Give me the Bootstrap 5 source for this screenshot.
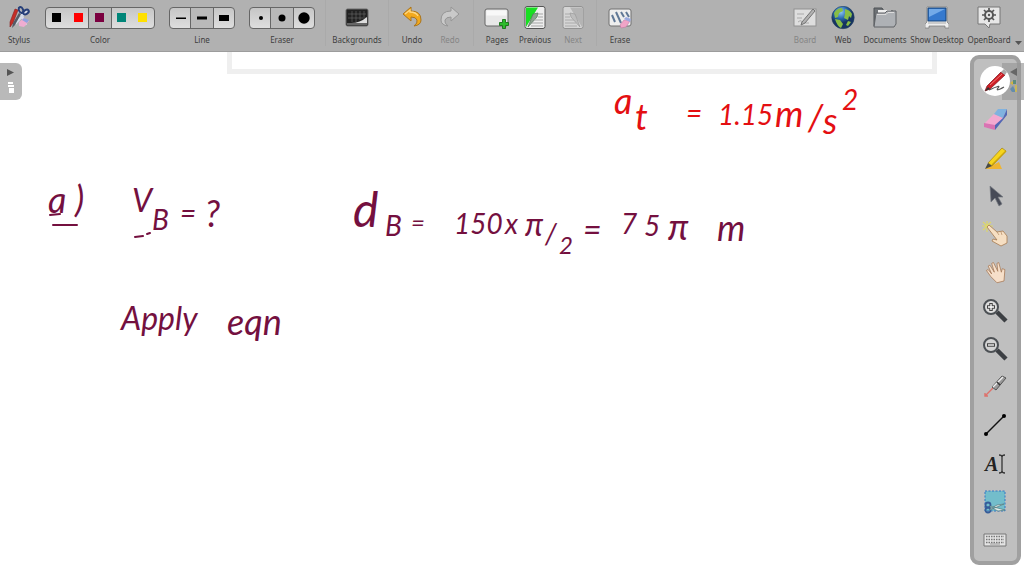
<!DOCTYPE html>
<html lang="en">
<head>
<meta charset="utf-8">
<meta name="viewport" content="width=device-width, initial-scale=1">
<title>OpenBoard</title>
<link href="https://cdn.jsdelivr.net/npm/bootstrap@5.3.0/dist/css/bootstrap.min.css" rel="stylesheet">
<style>
  body { font-family: "Noto Sans", "Open Sans", sans-serif; background: #fff; overflow: hidden; }
  .toolbar { background: #b1b1b1; height: 52px; padding-top: 6px; border-bottom: 1px solid #9c9c9c; font-size: 8px; line-height: 12px; color: #3e3e3e; }
  .tool { width: 38px; padding: 0; border: 0; background: none; color: inherit; white-space: nowrap; }
  .tool svg { width: 24px; height: 24px; margin-bottom: 4px; }
  .tool:disabled { color: #858585; }
  .tool-wide { width: 62px; }
  .tool-docs { width: 46px; }
  .tool-desk { width: 58px; }
  .pick-group { width: 66px; margin-left: 14px; }
  .pick-colors { width: 110px; margin-left: 7px; }
  .picker { margin: 1px 0 5px; border: 1px solid #666; border-radius: 4px; background: linear-gradient(#c6c6c6, #dedede); overflow: hidden; }
  .picker label { flex: 1 1 0; min-width: 0; height: 20px; cursor: pointer; }
  .picker .btn-check:checked + label { background: #b9b9b9; box-shadow: -1px 0 #666, 1px 0 #666; }
  .sep { width: 1px; height: 46px; margin-top: -6px; background: #aaa; }
  .sep-first { margin-left: 10px; }
  .board { min-height: 0; }
  .ink { font-family: Lato, "DejaVu Sans", sans-serif; font-style: italic; }
  .ink .sz-s { font-size: 24px; }
  .ink .sz-m { font-size: 28px; }
  .ink .sz-w { font-size: 32px; }
  .ink .sz-l { font-size: 36px; }
  .ink .sz-xl { font-size: 48px; }
  .edge-tab { top: 11px; width: 22px; height: 37px; border: 0; padding: 0; background: #b9b9b9; line-height: 1; }
  .edge-tab svg { width: 22px; height: 37px; display: block; }
  .palette { top: 3px; right: 3px; bottom: 11px; width: 51px; padding: 7px 2px 6px 0; background: #bfbfbf; border: 4px solid #a0a0a0; border-radius: 9px; }
  .palette button { width: 30px; height: 30px; padding: 0; border: 0; background: none; border-radius: 50%; }
  .palette button svg { width: 30px; height: 30px; display: block; }
  .palette .pen { z-index: 2; }
  .right-tab { right: 0; background: rgba(150,150,150,.65); }
</style>
</head>
<body class="vh-100 d-flex flex-column">
<header class="toolbar d-flex align-items-start flex-shrink-0">
  <button class="tool" type="button"><svg class="d-block mx-auto" viewBox="0 0 24 24"><path d="M11 2l8 17M20 5L8 18" stroke="#d5dbe8" stroke-width="2.5"/><g fill="none" stroke="#263f79" stroke-width="2"><ellipse cx="14" cy="4" rx="2" ry="3" transform="rotate(-25 14 4)"/><ellipse cx="19" cy="6" rx="2" ry="3" transform="rotate(55 19 6)"/></g><path d="M8 3l3 1-5 13-3 4 0-5z" fill="#c52d25" stroke="#8a2020" stroke-width=".6"/><path d="M12 7l2 1-6 11-3 3 1-5z" fill="#545b66"/><path d="M12 16l5-4 5 3-5 6-5-1z" fill="#efadd1"/><path d="M17 12l5 2-2 3-5-3z" fill="#8fa3df"/></svg>Stylus</button>
  <div class="pick-group pick-colors text-center" role="group" aria-label="Color">
    <div class="picker d-flex">
      <input class="btn-check" type="radio" name="color" id="c1"><label for="c1" aria-label="Black"><svg width="22" height="20" class="d-block"><path d="M6 5h9v9H6z"/></svg></label>
      <input class="btn-check" type="radio" name="color" id="c2"><label for="c2" aria-label="Red"><svg width="22" height="20" class="d-block"><path fill="#f00" d="M6 5h9v9H6z"/></svg></label>
      <input class="btn-check" type="radio" name="color" id="c3" checked><label for="c3" aria-label="Maroon"><svg width="22" height="20" class="d-block"><path fill="#7b0040" d="M6 5h9v9H6z"/></svg></label>
      <input class="btn-check" type="radio" name="color" id="c4"><label for="c4" aria-label="Teal"><svg width="22" height="20" class="d-block"><path fill="#008578" d="M6 5h9v9H6z"/></svg></label>
      <input class="btn-check" type="radio" name="color" id="c5"><label for="c5" aria-label="Yellow"><svg width="22" height="20" class="d-block"><path fill="#ffe000" d="M6 5h9v9H6z"/></svg></label>
    </div>Color
  </div>
  <div class="pick-group text-center" role="group" aria-label="Line">
    <div class="picker d-flex">
      <input class="btn-check" type="radio" name="line" id="l1"><label for="l1" aria-label="Fine"><svg width="22" height="20" class="d-block"><path d="M6 9.5h10V11H6z"/></svg></label>
      <input class="btn-check" type="radio" name="line" id="l2" checked><label for="l2" aria-label="Medium"><svg width="22" height="20" class="d-block"><path d="M6 8.500h10v3H6z"/></svg></label>
      <input class="btn-check" type="radio" name="line" id="l3"><label for="l3" aria-label="Strong"><svg width="22" height="20" class="d-block"><path d="M6 7h10v6H6z"/></svg></label>
    </div>Line
  </div>
  <div class="pick-group text-center" role="group" aria-label="Eraser">
    <div class="picker d-flex">
      <input class="btn-check" type="radio" name="eraser" id="e1"><label for="e1" aria-label="Small"><svg width="22" height="20" class="d-block"><circle cx="11" cy="10" r="2"/></svg></label>
      <input class="btn-check" type="radio" name="eraser" id="e2" checked><label for="e2" aria-label="Medium"><svg width="22" height="20" class="d-block"><circle cx="11" cy="10" r="3.5"/></svg></label>
      <input class="btn-check" type="radio" name="eraser" id="e3"><label for="e3" aria-label="Large"><svg width="22" height="20" class="d-block"><circle cx="11" cy="10" r="5.700"/></svg></label>
    </div>Eraser
  </div>
  <span class="sep sep-first"></span>
  <button class="tool tool-wide" type="button"><svg class="d-block mx-auto" viewBox="0 0 24 24"><rect x="1" y="3" width="22" height="17" rx="1.5" fill="#222" stroke="#6a6a6a"/><path d="M3 8h18M3 12h18M7 5v11M11 5v11M15 5v9M19 5v6" stroke="#6c6c6c" stroke-width=".6"/><path d="M6 17q9 0 16-6v6z" fill="#ddd"/><path d="M2 18h20" stroke="#aaa"/></svg>Backgrounds</button>
  <span class="sep"></span>
  <button class="tool ms-1" type="button"><svg class="d-block mx-auto" viewBox="0 0 24 24"><path d="M3 8l8-7v4q10 0 10 9 0 5-7 6 4-3 3-6-1-3-6-3v4z" fill="#f3a91c" stroke="#a9741d"/><path d="M5 8l5-4v2q6 0 8 4" stroke="#ffd884" stroke-width="1.3" fill="none"/></svg>Undo</button>
  <button class="tool" type="button" disabled><svg class="d-block mx-auto" viewBox="0 0 24 24"><path d="M21 8l-8-7v4Q3 5 3 14q0 5 7 6-4-3-3-6 1-3 6-3v4z" fill="#c9c9c9" stroke="#969696"/></svg>Redo</button>
  <span class="sep mx-1"></span>
  <button class="tool" type="button"><svg class="d-block mx-auto overflow-visible" viewBox="0 0 24 24"><rect x="0" y="3" width="23" height="17" rx="2" fill="#e8e8e8" stroke="#666"/><path d="M1.500 4.500h20v5h-20z" fill="#f8f8f8"/><path d="M16.500 14.500h3v3h3v3h-3v3h-3v-3h-3v-3h3z" transform="translate(1 -1)" fill="#2dbb2c" stroke="#167217" stroke-width=".9"/></svg>Pages</button>
  <button class="tool" type="button"><svg class="d-block mx-auto" viewBox="0 0 24 24"><rect x="2" y="0.500" width="20" height="22" rx="2" fill="#eee" stroke="#555"/><path d="M3 1.500h12L3 21z" fill="#18df22"/><path d="M5 21L10 8l5-1-1 4z" fill="#8ba28f" stroke="#54715a" stroke-width=".7"/><path d="M15 8h5M15 11h5M11 14h9M9 17h11M8 20h12" stroke="#a5a5a5"/></svg>Previous</button>
  <button class="tool" type="button" disabled><svg class="d-block mx-auto" viewBox="0 0 24 24"><rect x="2" y="0.500" width="20" height="22" rx="2" fill="#d5d5d5" stroke="#929292"/><path d="M9 1.500h12V21z" fill="#b4b4b4"/><path d="M19 21L14 8 9 7l1 4z" fill="#bdbdbd" stroke="#999" stroke-width=".7"/><path d="M4 8h5M4 11h5M4 14h9M4 17h11M4 20h12" stroke="#aaa"/></svg>Next</button>
  <span class="sep mx-1"></span>
  <button class="tool" type="button"><svg class="d-block mx-auto" viewBox="0 0 24 24"><rect x="1" y="3" width="22" height="17" rx="2" fill="#eee" stroke="#707070"/><path d="M4 9l3 7M8 6l5 11M13 6l3 5M18 6l3 5" stroke="#607896" stroke-width="2"/><path d="M12 19l4-5 6 1-4 6-5 1z" fill="#f0a4c7" stroke="#bb719e" stroke-width=".5"/><path d="M16 13l2-2 5 2-1 3z" fill="#9baae0"/></svg>Erase</button>

  <button class="tool ms-auto" type="button" disabled><svg class="d-block mx-auto" viewBox="0 0 24 24"><rect x="1" y="3" width="22" height="17" fill="#dedede" stroke="#929292"/><path d="M4 8h7M4 12h5M5 16q4-3 4 1h7" stroke="#aaa" fill="none"/><path d="M9 16L20 3l2 2-10 12-4 2z" fill="#b2b2b2" stroke="#747474"/></svg>Board</button>
  <button class="tool" type="button"><svg class="d-block mx-auto" viewBox="0 0 24 24"><defs><radialGradient id="globe" cx=".4" cy=".25"><stop stop-color="#8fc9f7"/><stop offset=".6" stop-color="#2766ad"/><stop offset="1" stop-color="#163461"/></radialGradient></defs><circle cx="12" cy="11.500" r="11.200" fill="url(#globe)" stroke="#24415f" stroke-width=".6"/><path d="M3 7q3-5 8-5l1 3-4 2-1 4-3 1zM4 13l5 1 3 4-2 4q-4-2-6-9zM14 3q5 1 7 5l-1 4-2-2-1 4-4-2 1-4zM17 15l3 1-3 4-2-1z" fill="#88bd45"/></svg>Web</button>
  <button class="tool tool-docs" type="button"><svg class="d-block mx-auto" viewBox="0 0 24 24"><path d="M1 20V2h8l2 3h9v14z" fill="#6e7276" stroke="#4d5054"/><path d="M5 4h13v3H5z" fill="#eee"/><path d="M3 7h9l2-2h9v13l-2 3H1z" fill="#aeb1b5" stroke="#606367"/><path d="M4 8.500h9l2-2h6" fill="none" stroke="#ddd"/></svg>Documents</button>
  <button class="tool tool-desk" type="button"><svg class="d-block mx-auto" viewBox="0 0 24 24"><path d="M2 1h20v15l2 2v4h-4v-2H4v2H0v-4l2-2z" fill="#eee" stroke="#777" stroke-width=".7"/><path d="M3 2h18v13H3z" fill="#3579ce" stroke="#174276"/><path d="M4 3h16L4 11z" fill="#73aae8"/><path d="M3 17h18" stroke="#aaa"/></svg>Show Desktop</button>
  <button class="tool tool-docs" type="button"><svg class="d-block mx-auto" viewBox="0 0 24 24"><path d="M1 1h22v17H13l-1 4-4-4H1z" fill="#e7e7e7" stroke="#777"/><circle cx="12" cy="9" r="4" fill="none" stroke="#555" stroke-width="2"/><path d="M12 2v3M12 13v3M5 9h3M16 9h3M7 4l2 2M15 12l2 2M17 4l-2 2M9 12l-2 2" stroke="#555" stroke-width="1.700"/><circle cx="12" cy="9" r="1.200" fill="#555"/></svg>OpenBoard</button>
  <svg class="align-self-end mb-1" width="12" height="8" aria-hidden="true"><path d="M3 2h7L6.500 6z" fill="#555"/></svg>
</header>

<main class="board position-relative flex-fill overflow-hidden">
  <!-- canvas: edge of the pasted page, then the pen notes -->
  <svg class="ink d-block w-100 h-100" aria-label="Whiteboard">
    <path d="M229.500-5V19.500H934.500V-5" fill="none" stroke="#efefef" stroke-width="5"/>
    <g fill="#e40f12">
      <text class="sz-l" x="614" y="62">a</text><text class="sz-l" x="635" y="78">t</text>
      <text class="sz-m" x="686" y="71">=</text>
      <text class="sz-m" x="718" y="73">1.15</text><text class="sz-l" x="775" y="75">m</text><text class="sz-l" x="808" y="79">/</text><text class="sz-l" x="823" y="82">s</text>
      <text class="sz-m" x="842" y="58">2</text>
    </g>
    <g fill="#74103f">
      <text class="sz-l" x="48" y="161">a</text><text class="sz-l" x="75" y="160">)</text>
      <text class="sz-w" x="132" y="160">V</text><text class="sz-m" x="152" y="178">B</text><text class="sz-m" x="180" y="171">=</text><text class="sz-l" x="205" y="175">?</text>
      <text class="sz-xl" x="353" y="175">d</text><text class="sz-m" x="385" y="184">B</text><text class="sz-s" x="411" y="179">=</text>
      <text class="sz-m" x="454" y="182">150</text><text class="sz-m" x="505" y="182">x</text><text class="sz-w" x="525" y="184">π</text><text class="sz-m" x="545" y="192">/</text><text class="sz-s" x="559" y="202">2</text>
      <text class="sz-w" x="583" y="189">=</text>
      <text class="sz-m" x="621" y="182">7</text><text class="sz-m" x="644" y="184">5</text><text class="sz-l" x="668" y="188">π</text><text class="sz-l" x="717" y="189">m</text>
      <text class="sz-w" x="121" y="278">Apply</text><text class="sz-l" x="227" y="283">eqn</text>
    </g>
    <path d="M50 163l10-1M53 173h24M135 185l8-1M147 182l3-1" stroke="#74103f" stroke-width="2" stroke-linecap="round" fill="none"/>
  </svg>

  <button class="edge-tab position-absolute start-0 rounded-end" type="button" aria-label="Page navigator"><svg viewBox="0 0 22 37"><path d="M7 6l7 3.500L7 13z" fill="#555"/><path d="M8 19h5v2H8zM8 22h6v2H8zM9 25h5v5H9z" fill="#fff"/></svg></button>

  <nav class="palette position-absolute d-flex flex-column justify-content-between align-items-center" aria-label="Drawing tools">
    <button type="button" class="pen bg-white" aria-label="Pen"><svg viewBox="0 0 30 30"><path d="M9 24q13-6 9-2-3 4 6-1" stroke="#555" stroke-width="1.200" fill="none"/><path d="M7 20L21 6l4 3L10 23l-5 2z" fill="#cf1d25" stroke="#78151b" stroke-width=".7"/><path d="M10 19L22 8" stroke="#f27c79"/><path d="M21 6l3-3 3 3-2 3z" fill="#aaa"/><path d="M5 25l3-4 2 2z" fill="#333"/></svg></button>
    <button type="button" aria-label="Eraser"><svg viewBox="0 0 30 30"><path d="M4 20L14 10l9 4-8 11-11-2z" fill="#f3a9d0"/><path d="M14 10l4-5h9l-4 9z" fill="#80b2df"/><path d="M27 5v6L15 26v-5l8-7z" fill="#5367b5"/><path d="M4 19l11 2v5L4 23z" fill="#d873b2"/></svg></button>
    <button type="button" aria-label="Marker"><svg viewBox="0 0 30 30"><path d="M5 26l14-7 3 7z" fill="#efb532"/><path d="M8 20L22 5l4 3-14 15z" fill="#f6d51e" stroke="#a28116" stroke-width=".7"/><path d="M12 22L26 8" stroke="#caa40d" stroke-width="1.500"/><path d="M8 20l4 3-7 3z" fill="#4a4b43"/></svg></button>
    <button type="button" aria-label="Select"><svg viewBox="0 0 30 30"><path d="M10 5l1 16 4-4 4 8 3-2-4-7h5z" fill="#474b57" stroke="#777b83" stroke-width=".7"/></svg></button>
    <button type="button" aria-label="Interact"><svg viewBox="0 0 30 30"><path d="M7 2v11M2 7h11M3 3l8 8M11 3l-8 8" stroke="#ddd76a" stroke-width="1.200"/><path d="M7 8l2-2 8 7 6-1 4 5v7l-6 3-9-5 1-2 4 1z" fill="#f6dfc3" stroke="#a77b51" stroke-width=".8"/><path d="M17 13l2 3M21 13l1 3" stroke="#a77b51" stroke-width=".6"/></svg></button>
    <button type="button" aria-label="Scroll page"><svg viewBox="0 0 30 30"><path d="M5 13l2-1 4 5-4-9 2-1 5 8-3-10 2-1 5 10-1-9 2-1 3 11 1-4 3 1-1 13-8 2-7-7z" transform="translate(2 2) scale(.88)" fill="#f6dfc9" stroke="#a77b59" stroke-width=".9"/></svg></button>
    <button type="button" aria-label="Zoom in"><svg viewBox="0 0 30 30"><path d="M17 16l9 9" stroke="#3c3f43" stroke-width="4.500"/><circle cx="11" cy="11" r="7" fill="#ddd" stroke="#4c5054" stroke-width="2"/><path d="M7 11h8M11 7v8" stroke="#444" stroke-width="3.500"/><path d="M8 11h6M11 8v6" stroke="#fff" stroke-width="1.300"/></svg></button>
    <button type="button" aria-label="Zoom out"><svg viewBox="0 0 30 30"><path d="M17 16l9 9" stroke="#3c3f43" stroke-width="4.500"/><circle cx="11" cy="11" r="7" fill="#d4d4d4" stroke="#4c5054" stroke-width="2"/><path d="M7 11h8" stroke="#444" stroke-width="3.500"/><path d="M8 11h6" stroke="#fff" stroke-width="1.300"/></svg></button>
    <button type="button" aria-label="Laser pointer"><svg viewBox="0 0 30 30"><path d="M5 24l8-8M5 21v3h3" stroke="#de716b" stroke-width="1.400" fill="none"/><path d="M12 15L22 4l4 2-10 12z" fill="#999" stroke="#555"/><path d="M13 15L23 5" stroke="#eee" stroke-width="1.500"/><path d="M17 10l3 3" stroke="#333" stroke-width="1.500"/></svg></button>
    <button type="button" aria-label="Line"><svg viewBox="0 0 30 30"><path d="M6 24L24 6" stroke="#111" stroke-width="1.500"/><circle cx="6" cy="24" r="2"/><circle cx="24" cy="6" r="2"/></svg></button>
    <button type="button" aria-label="Text"><svg viewBox="0 0 30 30"><text x="5" y="22" font-family="Liberation Serif, serif" font-size="20" font-weight="bold" font-style="italic" fill="#222">A</text><path d="M19 6q3 0 3 2 0-2 3-2M22 8v14M19 24q3 0 3-2 0 2 3 2" stroke="#333" stroke-width="1.300" fill="none"/></svg></button>
    <button type="button" aria-label="Capture"><svg viewBox="0 0 30 30"><path d="M5 4h20v20H5z" fill="#73bdcb" stroke="#3576c3" stroke-dasharray="2 1.500"/><g fill="none" stroke="#355c99" stroke-width="1.800"><circle cx="8" cy="18" r="2.500"/><circle cx="8" cy="23" r="2.500"/></g><path d="M10 19l15 4-7 1-8-4zM10 23l14-6-7 1-7 4z" fill="#e2ece9" stroke="#50797c" stroke-width=".7"/></svg></button>
    <button type="button" aria-label="Virtual keyboard"><svg viewBox="0 0 30 30"><path d="M4 9h22v12H4z" fill="#e4e4e4" stroke="#777"/><path d="M6 11.500h18M6 14.500h18M6 17.500h18" stroke="#777" stroke-width="1.500" stroke-dasharray="1.500 1"/><path d="M10 19h10" stroke="#999"/></svg></button>
  </nav>
  <button class="edge-tab right-tab position-absolute" type="button" aria-label="Library"><svg viewBox="0 0 22 37"><path d="M15 5L8 9l7 4z" fill="#666"/><path d="M8 20l3-2v4z" fill="#d3b53c"/><path d="M11 17h3v4h-3z" fill="#5d8b7d"/><path d="M8 26l3-3 3 6h-4z" fill="#648cac"/><path d="M13 22h2v7h-2z" fill="#c8b65a"/></svg></button>
</main>
<script src="https://cdn.jsdelivr.net/npm/bootstrap@5.3.0/dist/js/bootstrap.bundle.min.js"></script>
</body>
</html>
